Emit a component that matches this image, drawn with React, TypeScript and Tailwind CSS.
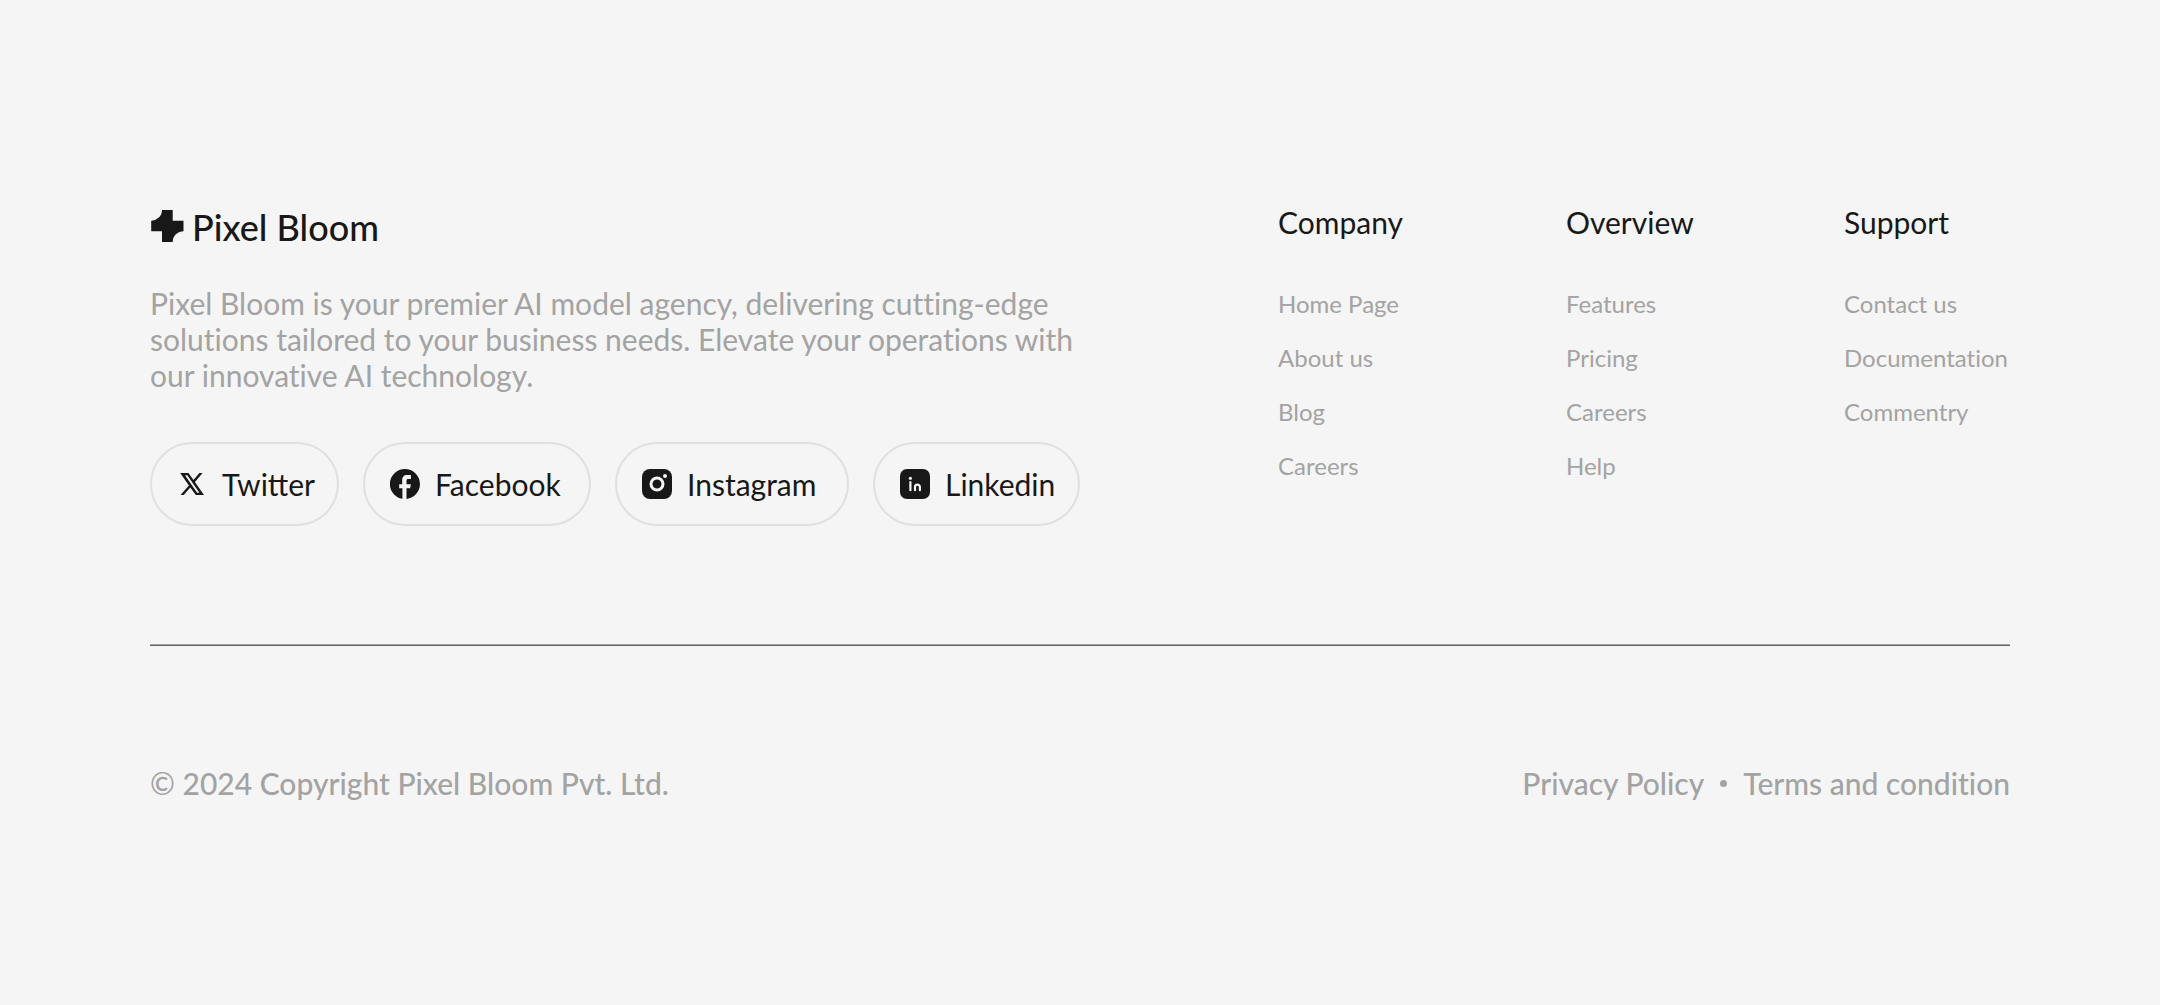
import type { ReactNode } from "react";

function XIcon() {
  return (
    <svg viewBox="0 0 30 30" className="size-[30px] shrink-0" aria-hidden="true">
      <path
        fill="currentColor"
        fillRule="evenodd"
        d="M3.200 4H11.400L16.500 11L22.400 4H25.600L17.900 13L27 26H18.800L13.300 18.500L6.700 26H3.500L11.900 16.500ZM8 6.200L20.100 23.800H22.400L10.300 6.200Z"
      />
    </svg>
  );
}

function FacebookIcon() {
  return (
    <svg viewBox="0 0 30 30" className="size-[30px] shrink-0" aria-hidden="true">
      <path
        fill="currentColor"
        d="M15 0a15 15 0 0 1 1.500 29.920V19.300h3.700l.6-4.100h-4.300v-3.600c0-1 .6-1.700 1.700-1.700h2.700V6h-3.700c-3.400 0-5 2.100-5 5v4.200H9.200v4.100h3.200v10.500A15 15 0 0 1 15 0Z"
      />
    </svg>
  );
}

function InstagramIcon() {
  return (
    <svg viewBox="0 0 30 30" className="size-[30px] shrink-0" aria-hidden="true">
      <rect width="30" height="30" rx="8" fill="currentColor" />
      <circle cx="15" cy="15" r="6" fill="none" stroke="#f5f5f5" strokeWidth="3" />
      <circle cx="23" cy="7" r="2" fill="#f5f5f5" />
    </svg>
  );
}

function LinkedinIcon() {
  return (
    <svg viewBox="0 0 30 30" className="size-[30px] shrink-0" aria-hidden="true">
      <rect width="30" height="30" rx="7" fill="currentColor" />
      <circle cx="10.400" cy="9.300" r="1.600" fill="#f5f5f5" />
      <path
        d="M10.400 13v8.200M15 21.200V18a2.400 2.400 0 0 1 4.900 0v3.200"
        fill="none"
        stroke="#f5f5f5"
        strokeWidth="2.200"
        strokeLinecap="round"
      />
    </svg>
  );
}

const socials: { label: string; icon: ReactNode; width: string }[] = [
  { label: "Twitter", icon: <XIcon />, width: "w-[189px]" },
  { label: "Facebook", icon: <FacebookIcon />, width: "w-[228px]" },
  { label: "Instagram", icon: <InstagramIcon />, width: "w-[234px]" },
  { label: "Linkedin", icon: <LinkedinIcon />, width: "w-[207px]" },
];

const columns = [
  { title: "Company", links: ["Home Page", "About us", "Blog", "Careers"] },
  { title: "Overview", links: ["Features", "Pricing", "Careers", "Help"] },
  { title: "Support", links: ["Contact us", "Documentation", "Commentry"] },
];

export default function App() {
  return (
    <footer className="min-h-screen bg-[#f5f5f5] px-[150px] pt-[204px] pb-48 font-['Lato',sans-serif] text-[30px] leading-9 text-[#181818]">
      <div className="flex justify-between">
        <div className="w-[930px]">
          <a href="#" className="flex h-[45px] items-center gap-2 text-4xl font-medium">
            <svg viewBox="0 0 34 34" className="size-[34px] shrink-0" aria-hidden="true">
              <path
                fill="currentColor"
                d="M12 0H22.700V10.700H33.500V21.300A10.600 10.600 0 0 0 22.700 32H12V21.300H1.200V10.700A10.700 10.700 0 0 0 12 0Z"
              />
            </svg>
            Pixel Bloom
          </a>
          <p className="mt-9 text-[#a3a3a3] [font-variant-ligatures:none]">
            Pixel Bloom is your premier AI model agency, delivering cutting-edge
            <br />
            solutions tailored to your business needs. Elevate your operations with
            <br />
            our innovative AI technology.
          </p>
          <ul className="mt-[49px] flex gap-6">
            {socials.map((s) => (
              <li key={s.label}>
                <a
                  href="#"
                  className={`flex h-[84px] items-center gap-[15px] rounded-full border-2 border-[#e0e0e0] pl-[25px] ${s.width}`}
                >
                  {s.icon}
                  {s.label}
                </a>
              </li>
            ))}
          </ul>
        </div>
        <nav className="grid grid-cols-[288px_278px_166px]">
          {columns.map((c) => (
            <div key={c.title}>
              <h2>{c.title}</h2>
              <ul className="mt-[49px] flex flex-col gap-6 text-2xl leading-[30px] text-[#a3a3a3] [font-variant-ligatures:none]">
                {c.links.map((l) => (
                  <li key={l}>
                    <a href="#">{l}</a>
                  </li>
                ))}
              </ul>
            </div>
          ))}
        </nav>
      </div>
      <hr className="mt-[118px] h-0.5 border-t border-b border-t-[#a3a3a3] border-b-[#666666]" />
      <div className="mt-[119px] flex justify-between font-medium text-[#a3a3a3] [font-variant-ligatures:none]">
        <p>© 2024 Copyright Pixel Bloom Pvt. Ltd.</p>
        <div className="flex items-center gap-4">
          <a href="#">Privacy Policy</a>
          <span className="size-[7px] rounded-full bg-current" />
          <a href="#">Terms and condition</a>
        </div>
      </div>
    </footer>
  );
}
